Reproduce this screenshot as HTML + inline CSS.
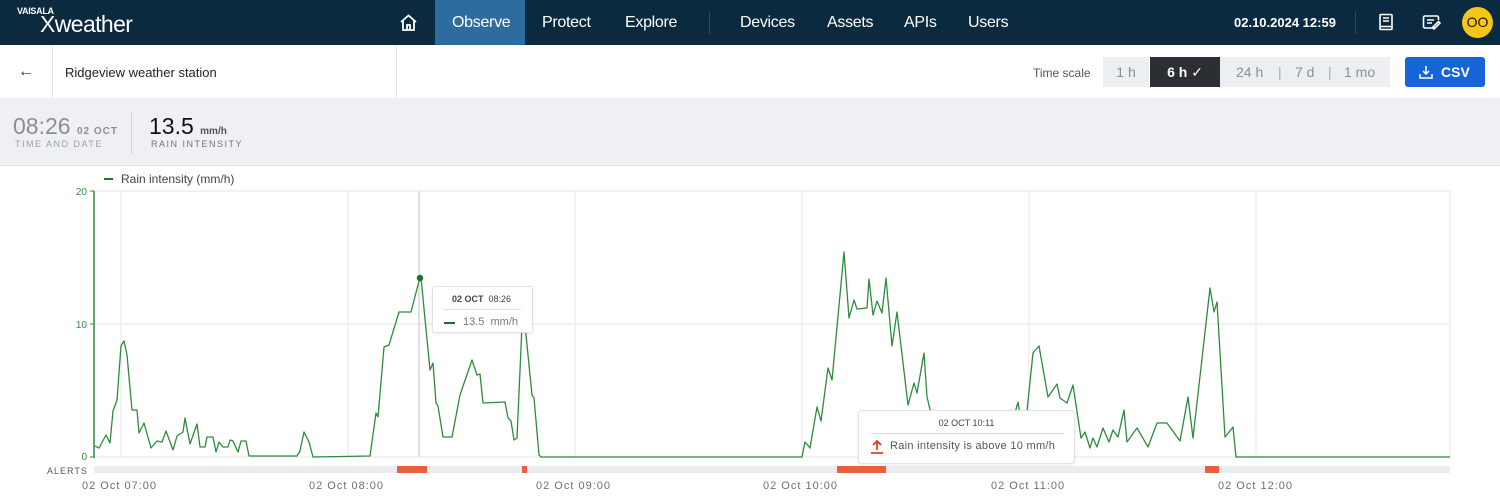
<!DOCTYPE html>
<html><head><meta charset="utf-8"><style>
*{margin:0;padding:0;box-sizing:border-box}
body{width:1500px;height:503px;overflow:hidden;background:#fff;font-family:"Liberation Sans",sans-serif;position:relative}
.a{position:absolute;white-space:nowrap}
.nav{left:0;top:0;width:1500px;height:45px;background:#0b2a3f}
.nt{color:#fff;font-size:16px;top:14px;letter-spacing:-0.3px}
.tab{top:0;left:435px;width:90px;height:45px;background:#2d6c9e}
.sub{left:0;top:45px;width:1500px;height:53px;background:#fff;box-shadow:0 2px 4px rgba(0,0,0,.12)}
.stats{left:0;top:98px;width:1500px;height:68px;background:#eef0f3;border-bottom:1px solid #dde0e4}
.lab{font-size:9px;letter-spacing:1.5px;color:#9aa0a6}
.ts{top:57px;height:30px;background:#eceff2;color:#8a8f95;font-size:14px;text-align:center;line-height:30px}
.xl{top:480px;font-size:11px;color:#6b6f74;letter-spacing:1px}
</style></head><body>
<div class="a nav"></div>
<div class="a tab"></div>
<div class="a" style="left:17px;top:6px;color:#fff;font-size:9px;font-weight:bold;letter-spacing:-0.3px">VAISALA</div>
<div class="a" style="left:40px;top:11px;color:#fff;font-size:23px;letter-spacing:-0.6px">Xweather</div>
<svg class="a" style="left:399px;top:13px" width="19" height="19" viewBox="0 0 19 19" fill="none" stroke="#fff" stroke-width="1.8"><path d="M2 9 L9.5 2.5 L17 9 M4 7.5 V17 H15 V7.5 M8 17 V12 H11 V17"/></svg>
<div class="a nt" style="left:452px">Observe</div>
<div class="a nt" style="left:542px">Protect</div>
<div class="a nt" style="left:625px">Explore</div>
<div class="a" style="left:709px;top:11px;width:1px;height:23px;background:#2e4a5e"></div>
<div class="a nt" style="left:740px">Devices</div>
<div class="a nt" style="left:827px">Assets</div>
<div class="a nt" style="left:904px">APIs</div>
<div class="a nt" style="left:968px">Users</div>
<div class="a" style="left:1234px;top:15px;color:#fff;font-size:13px;font-weight:bold">02.10.2024 12:59</div>
<div class="a" style="left:1355px;top:11px;width:1px;height:23px;background:#2e4a5e"></div>
<svg class="a" style="left:1378px;top:13px" width="16" height="19" viewBox="0 0 16 19" fill="none" stroke="#fff" stroke-width="1.6"><rect x="2" y="1.5" width="12" height="15" rx="1"/><path d="M2 13.5H14M5 5H11M5 8H11"/></svg>
<svg class="a" style="left:1422px;top:14px" width="20" height="17" viewBox="0 0 20 17" fill="none" stroke="#fff" stroke-width="1.6"><path d="M13 14H3a1.5 1.5 0 0 1-1.5-1.5v-9A1.5 1.5 0 0 1 3 2h12a1.5 1.5 0 0 1 1.5 1.5V6M5 6H12M5 9H10M12 15l6-6-1.5-1.5-6 6z"/></svg>
<div class="a" style="left:1462px;top:7px;width:31px;height:31px;border-radius:50%;background:#f5c518;color:#1b1b1b;font-size:14px;text-align:center;line-height:31px">OO</div>

<div class="a sub"></div>
<div class="a" style="left:52px;top:45px;width:1px;height:53px;background:#e3e5e8"></div>
<div class="a" style="left:396px;top:45px;width:1px;height:53px;background:#e3e5e8"></div>
<div class="a" style="left:18px;top:63px;font-size:16px;color:#333">←</div>
<div class="a" style="left:65px;top:65px;font-size:13px;color:#222">Ridgeview weather station</div>
<div class="a" style="left:1033px;top:66px;font-size:12px;color:#555">Time scale</div>
<div class="a ts" style="left:1103px;width:46px">1 h</div>
<div class="a ts" style="left:1150px;width:70px;background:#2b2e33;color:#fff;font-weight:bold">6 h <span style="font-weight:normal">✓</span></div>
<div class="a ts" style="left:1220px;width:170px"><span style="position:absolute;left:16px">24 h</span><span style="position:absolute;left:58px;color:#aaa">|</span><span style="position:absolute;left:75px">7 d</span><span style="position:absolute;left:108px;color:#aaa">|</span><span style="position:absolute;left:124px">1 mo</span></div>
<div class="a" style="left:1405px;top:57px;width:80px;height:30px;background:#1565d8;border-radius:3px;color:#fff;font-size:14px;font-weight:bold;line-height:30px;padding-left:36px">CSV</div>
<svg class="a" style="left:1418px;top:64px" width="16" height="16" viewBox="0 0 16 16" fill="none" stroke="#fff" stroke-width="1.5"><path d="M8 2V10M5 7L8 10L11 7M2 10V14H14V10"/></svg>

<div class="a stats"></div>
<div class="a" style="left:13px;top:113px;font-size:23px;color:#8a8f95">08:26 <span style="font-size:10px;font-weight:bold;letter-spacing:1px">02 OCT</span></div>
<div class="a lab" style="left:15px;top:139px">TIME AND DATE</div>
<div class="a" style="left:131px;top:111px;width:1px;height:43px;background:#cfd3d7"></div>
<div class="a" style="left:149px;top:113px;font-size:23px;color:#111">13.5 <span style="font-size:10px;font-weight:bold;color:#555">mm/h</span></div>
<div class="a lab" style="left:151px;top:139px;color:#6f757b">RAIN INTENSITY</div>

<svg class="a" style="left:0;top:166px" width="1500" height="337" viewBox="0 166 1500 337">
<g stroke="#eceef1" stroke-width="1.5">
<line x1="94" y1="191" x2="1450" y2="191"/><line x1="94" y1="324" x2="1450" y2="324"/><line x1="94" y1="457" x2="1450" y2="457"/>
<line x1="121" y1="191" x2="121" y2="457"/><line x1="348" y1="191" x2="348" y2="457"/><line x1="575" y1="191" x2="575" y2="457"/><line x1="802" y1="191" x2="802" y2="457"/><line x1="1029" y1="191" x2="1029" y2="457"/><line x1="1256" y1="191" x2="1256" y2="457"/>
<line x1="1450" y1="191" x2="1450" y2="457"/>
</g>
<line x1="419" y1="191" x2="419" y2="457" stroke="#d3d6da" stroke-width="1.5"/>
<line x1="94" y1="191" x2="94" y2="458" stroke="#2e8b3e" stroke-width="1.5"/>
<g stroke="#2e8b3e" stroke-width="1"><line x1="90" y1="191" x2="94" y2="191"/><line x1="90" y1="324" x2="94" y2="324"/><line x1="90" y1="457" x2="94" y2="457"/></g>
<g font-size="10" fill="#2e8b3e" text-anchor="end" font-family="Liberation Sans"><text x="87" y="195">20</text><text x="87" y="328">10</text><text x="87" y="460">0</text></g>
<line x1="104" y1="179" x2="113" y2="179" stroke="#1e7a2e" stroke-width="2"/>
<text x="121" y="183" font-size="12" fill="#444" font-family="Liberation Sans">Rain intensity (mm/h)</text>
<polyline fill="none" stroke="#2e8b3e" stroke-width="1.3" stroke-linejoin="round" points="95,446 99,448 106,435 110,443 113,411 117,400 121,346 124,341 127,355 132,410 137,410 139,433 144,423 151,448 157,441 162,442 166,431 173,450 177,436 183,432 185,418 190,444 197,424 200,447 205,447 207,437 213,437 216,452 219,442 223,447 228,447 230,440 233,441 238,452 241,441 246,441 249,456 297,456 300,451 304,432 309,442 313,457 370,456 376,413 378,417 384,347 389,345 399,312 411,312 419,281 421,278 430,370 433,363 436,403 438,406 443,437 452,437 460,395 472,360 477,375 480,374 483,403 505,402 508,418 511,421 514,440 517,438 522,325 525,325 532,395 534,398 539,455 541,457 802,457 805,442 810,448 817,407 821,421 828,368 832,380 837,327 844,252 849,318 854,300 857,309 867,308 869,279 873,315 877,301 882,313 886,278 892,346 897,312 908,405 914,383 917,393 924,353 927,397 935,430 945,452 955,457 1008,457 1013,420 1018,402 1024,440 1033,353 1039,346 1048,397 1057,384 1060,398 1067,403 1073,385 1081,438 1085,432 1090,448 1093,438 1097,447 1103,428 1109,442 1113,430 1118,437 1124,410 1127,442 1137,428 1148,447 1157,423 1167,423 1180,441 1188,397 1193,438 1210,288 1214,312 1217,302 1225,437 1233,427 1236,457 1450,457"/>
<circle cx="420" cy="278" r="3.2" fill="#1e6b2a"/>
<rect x="94" y="466" width="1356" height="7" fill="#eaedf0"/>
<g fill="#e8603c"><rect x="397" y="466" width="30" height="7"/><rect x="522" y="466" width="5" height="7"/><rect x="837" y="466" width="49" height="7"/><rect x="1205" y="466" width="14" height="7"/></g>
<text x="47" y="474" font-size="9" fill="#555" letter-spacing="1" font-family="Liberation Sans">ALERTS</text>
</svg>
<div class="a xl" style="left:82px">02 Oct 07:00</div>
<div class="a xl" style="left:309px">02 Oct 08:00</div>
<div class="a xl" style="left:536px">02 Oct 09:00</div>
<div class="a xl" style="left:763px">02 Oct 10:00</div>
<div class="a xl" style="left:991px">02 Oct 11:00</div>
<div class="a xl" style="left:1218px">02 Oct 12:00</div>

<div class="a" style="left:432px;top:286px;width:101px;height:47px;background:#fff;border:1px solid #dfe2e6;border-radius:3px;box-shadow:0 1px 3px rgba(0,0,0,.08)">
<div class="a" style="left:19px;top:7px;font-size:9px;color:#444"><b>02 OCT</b>&nbsp; 08:26</div>
<div class="a" style="left:10px;top:22px;width:78px;height:1px;background:#e0e3e6"></div>
<div class="a" style="left:11px;top:35px;width:11px;height:2px;background:#1e6b2a"></div>
<div class="a" style="left:30px;top:29px;font-size:11px;color:#777">13.5&nbsp; mm/h</div>
</div>
<div class="a" style="left:858px;top:410px;width:217px;height:54px;background:#fff;border:1px solid #dfe2e6;border-radius:4px;box-shadow:0 1px 3px rgba(0,0,0,.08)">
<div class="a" style="left:0;width:215px;text-align:center;top:7px;font-size:9px;color:#444">02 OCT 10:11</div>
<div class="a" style="left:12px;top:22px;width:193px;height:1px;background:#d8dbdf"></div>
<svg class="a" style="left:11px;top:28px" width="14" height="15" viewBox="0 0 14 15" fill="none" stroke="#d9441c" stroke-width="1.8"><path d="M7 11V2M3 6L7 2L11 6M1 14H13"/></svg>
<div class="a" style="left:31px;top:29px;font-size:11px;color:#555;letter-spacing:.3px">Rain intensity is above 10 mm/h</div>
</div>
</body></html>
